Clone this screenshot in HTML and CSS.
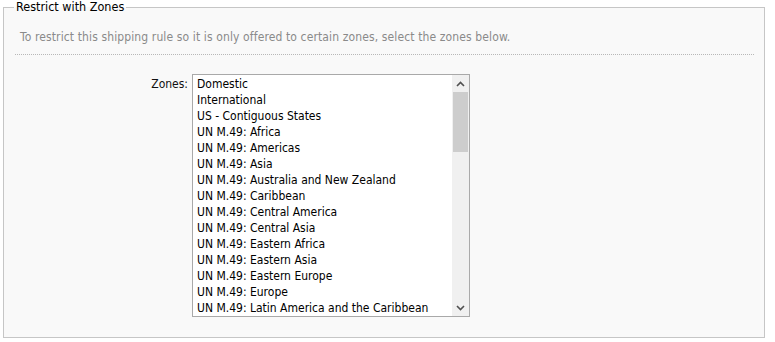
FILE: index.html
```html
<!DOCTYPE html>
<html lang="en">
<head>
  <meta charset="UTF-8" />
  <title>Restrict with Zones</title>
  <link rel="stylesheet" href="styles.css">
</head>
<body>
  <fieldset class="zones-box">
    <legend>Restrict with Zones</legend>
    <p class="hint">To restrict this shipping rule so it is only offered to certain zones, select the zones below.</p>
    <div class="field-row">
      <label class="field-label">Zones:</label>
      <div class="listbox">
        <ul class="options">
          <li>Domestic</li>
          <li>International</li>
          <li>US - Contiguous States</li>
          <li>UN M.49: Africa</li>
          <li>UN M.49: Americas</li>
          <li>UN M.49: Asia</li>
          <li>UN M.49: Australia and New Zealand</li>
          <li>UN M.49: Caribbean</li>
          <li>UN M.49: Central America</li>
          <li>UN M.49: Central Asia</li>
          <li>UN M.49: Eastern Africa</li>
          <li>UN M.49: Eastern Asia</li>
          <li>UN M.49: Eastern Europe</li>
          <li>UN M.49: Europe</li>
          <li>UN M.49: Latin America and the Caribbean</li>
        </ul>
        <div class="scrollbar">
          <div class="arrow">
            <svg width="9" height="6" viewBox="0 0 9 6"><polyline points="1,5 4.5,1.5 8,5" fill="none" stroke="#505050" stroke-width="1.6"/></svg>
          </div>
          <div class="track"><div class="thumb"></div></div>
          <div class="arrow">
            <svg width="9" height="6" viewBox="0 0 9 6"><polyline points="1,1 4.5,4.5 8,1" fill="none" stroke="#505050" stroke-width="1.6"/></svg>
          </div>
        </div>
      </div>
    </div>
  </fieldset>
</body>
</html>
```

FILE: styles.css
```css
* {
  box-sizing: border-box;
}
html, body {
  margin: 0;
  padding: 0;
  background: #fff;
}
body {
  font-family: 'DejaVu Sans Condensed', 'DejaVu Sans', sans-serif;
  font-size: 12px;
  color: #000;
}
.zones-box {
  margin: 0 10px 0 3px;
  padding: 0 10px 21px 11px;
  height: 338px;
  border: 1px solid #c6c6c6;
  background: #f9f9f9;
}
.zones-box legend {
  padding: 0 2px;
  margin-left: -1px;
  font-size: 12.5px;
  line-height: 14px;
}
.hint {
  margin: 0;
  padding: 17px 5px 10px;
  line-height: 13px;
  letter-spacing: 0.12px;
  color: #8a8a8a;
  border-bottom: 1px dotted #b8b8b8;
}
.field-row {
  display: flex;
  gap: 4px;
  margin-top: 19px;
}
.field-label {
  width: 173px;
  text-align: right;
  padding-top: 3px;
  color: #111;
}
.listbox {
  display: flex;
  width: 278px;
  height: 243px;
  border: 1px solid #a9a9a9;
  background: #fff;
}
.options {
  flex: 1;
  margin: 0;
  padding: 1px 0 0 4px;
  list-style: none;
  line-height: 16px;
  overflow: hidden;
  white-space: nowrap;
}
.scrollbar {
  width: 17px;
  display: flex;
  flex-direction: column;
  background: #f0f0f0;
}
.arrow {
  height: 17px;
  display: flex;
  align-items: center;
  justify-content: center;
}
.track {
  flex: 1;
  padding: 0 1px;
}
.thumb {
  height: 60px;
  background: #cdcdcd;
}
```
